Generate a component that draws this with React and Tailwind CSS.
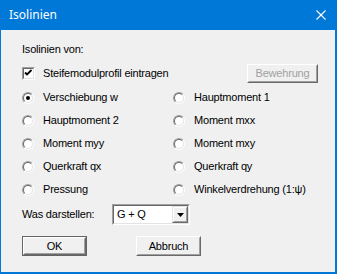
import React, { useState } from "react";

const Radio = ({ checked, label, onClick }) => (
  <div className="flex items-center h-[23px] cursor-default" onClick={onClick}>
    <div className="w-[12px] h-[12px] rounded-full border border-t-[#a0a0a0] border-l-[#a0a0a0] border-b-white border-r-white">
      <div className="w-full h-full rounded-full bg-white border border-t-[#696969] border-l-[#696969] border-b-[#e3e3e3] border-r-[#e3e3e3] flex items-center justify-center">
        {checked && <div className="w-[4px] h-[4px] rounded-full bg-black" />}
      </div>
    </div>
    <span className="ml-[9px]">{label}</span>
  </div>
);

const Button = ({ children, isDefault, disabled, className = "" }) => (
  <div className={`${isDefault ? "border border-[#646464]" : ""} ${className}`}>
    <div className="h-full border border-t-white border-l-white border-b-[#696969] border-r-[#696969]">
      <div className={`h-full flex items-center justify-center bg-[#f0f0f0] border border-t-[#f0f0f0] border-l-[#f0f0f0] border-b-[#a0a0a0] border-r-[#a0a0a0] ${disabled ? "text-[#a0a0a0]" : "text-black"}`}>
        {children}
      </div>
    </div>
  </div>
);

const App = () => {
  const [selected, setSelected] = useState("Verschiebung w");
  const [profil, setProfil] = useState(true);

  const left = ["Verschiebung w", "Hauptmoment 2", "Moment myy", "Querkraft qx", "Pressung"];
  const right = ["Hauptmoment 1", "Moment mxx", "Moment mxy", "Querkraft qy", "Winkelverdrehung (1:ψ)"];

  return (
    <div className="w-[337px] h-[274px] flex flex-col bg-[#0078d7]" style={{ fontFamily: '"Liberation Sans", Arial, sans-serif' }}>
      {/* title bar */}
      <div className="h-[30px] flex items-center justify-between pl-[9px] pr-[11px] text-white">
        <span className="text-[12px]" style={{ fontFamily: '"Noto Sans", sans-serif' }}>Isolinien</span>
        <svg width="10" height="10" viewBox="0 0 10 10">
          <path d="M0.5 0.5 L9.5 9.5 M9.5 0.5 L0.5 9.5" stroke="white" strokeWidth="1.1" />
        </svg>
      </div>

      {/* body */}
      <div className="flex-1 bg-[#f0f0f0] ml-[1px] mr-[2px] mb-[2px] pl-[21px] pr-[17px] pt-[13px] text-[11px] tracking-[-0.2px] text-black leading-[13px]">
        <div className="h-[13px]">Isolinien von:</div>

        <div className="mt-[8px] h-[19px] flex items-center justify-between">
          <div className="flex items-center cursor-default" onClick={() => setProfil(!profil)}>
            <div className="w-[13px] h-[13px] border border-t-[#a0a0a0] border-l-[#a0a0a0] border-b-white border-r-white">
              <div className="w-full h-full bg-white border border-t-[#696969] border-l-[#696969] border-b-[#e3e3e3] border-r-[#e3e3e3]">
                {profil && (
                  <svg width="9" height="9" viewBox="0 0 9 9">
                    <path d="M1 3.5 L3 5.5 L7.5 1" stroke="black" strokeWidth="1.8" fill="none" />
                  </svg>
                )}
              </div>
            </div>
            <span className="ml-[8px]">Steifemodulprofil eintragen</span>
          </div>
          <Button disabled className="w-[71px] h-[19px]">Bewehrung</Button>
        </div>

        <div className="mt-[3px] grid grid-cols-[151px_1fr]">
          {left.map((l, i) => (
            <React.Fragment key={l}>
              <Radio label={l} checked={selected === l} onClick={() => setSelected(l)} />
              <Radio label={right[i]} checked={selected === right[i]} onClick={() => setSelected(right[i])} />
            </React.Fragment>
          ))}
        </div>

        <div className="mt-[3px] h-[21px] flex items-center">
          <span className="w-[90px]">Was darstellen:</span>
          <div className="w-[78px] h-[21px] border border-t-[#a0a0a0] border-l-[#a0a0a0] border-b-white border-r-white">
            <div className="h-full flex bg-white border border-t-[#696969] border-l-[#696969] border-b-[#e3e3e3] border-r-[#e3e3e3]">
              <div className="flex-1 flex items-center pl-[3px]">G + Q</div>
              <div className="w-[16px] border border-t-[#e3e3e3] border-l-[#e3e3e3] border-b-[#696969] border-r-[#696969]">
                <div className="h-full bg-[#f0f0f0] flex items-center justify-center border border-t-white border-l-white border-b-[#a0a0a0] border-r-[#a0a0a0]">
                  <svg width="7" height="4" viewBox="0 0 7 4">
                    <path d="M0 0 H7 L3.5 4 Z" fill="black" />
                  </svg>
                </div>
              </div>
            </div>
          </div>
        </div>

        <div className="mt-[11px] flex gap-[49px]">
          <Button isDefault className="w-[65px] h-[20px]">OK</Button>
          <Button className="w-[65px] h-[20px]">Abbruch</Button>
        </div>
      </div>
    </div>
  );
};

export default App;
